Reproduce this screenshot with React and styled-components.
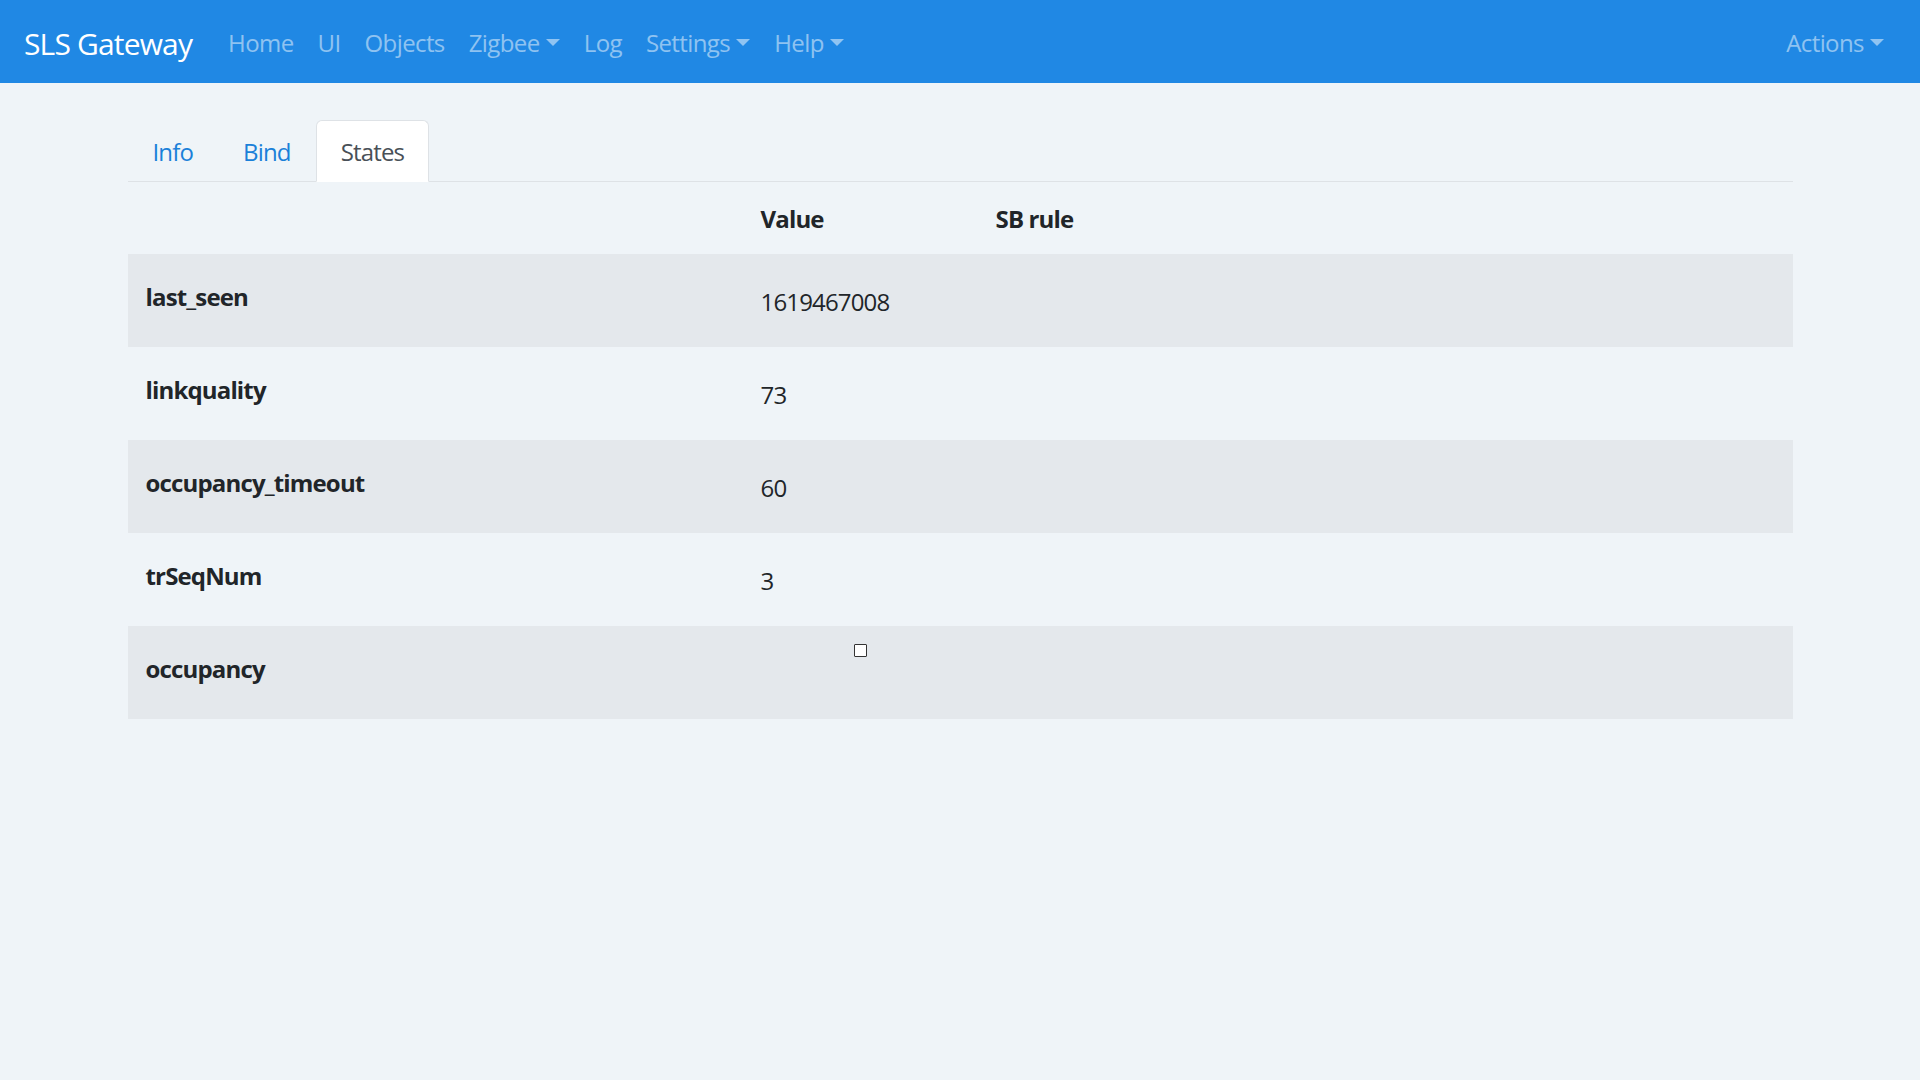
import React from 'react';
import styled, { createGlobalStyle, css } from 'styled-components';

const GlobalStyle = createGlobalStyle`
  html, body {
    margin: 0;
    padding: 0;
  }
  body {
    background: #eff4f8;
    color: #212529;
    font-family: "Open Sans", "Noto Sans", Arial, sans-serif;
    font-size: 24px;
    line-height: 1.5;
    letter-spacing: -0.035em;
  }
  * {
    box-sizing: border-box;
  }
`;

const Navbar = styled.nav`
  display: flex;
  align-items: center;
  height: 83px;
  padding: 14px 24px 11px;
  background: #2088e4;
`;

const Brand = styled.a`
  font-size: 30px;
  line-height: 45px;
  color: #fff;
  margin-right: 24px;
  text-decoration: none;
  white-space: nowrap;
`;

const NavList = styled.div`
  display: flex;
  align-items: center;
  ${({ $right }) => $right && css`margin-left: auto;`}
`;

const NavLink = styled.a`
  padding: 0 12px;
  line-height: 36px;
  letter-spacing: -0.025em;
  color: rgba(255, 255, 255, 0.5);
  text-decoration: none;
  white-space: nowrap;
  ${({ $dropdown }) =>
    $dropdown &&
    css`
      &::after {
        content: '';
        display: inline-block;
        margin-left: 0.255em;
        vertical-align: 0.255em;
        border-top: 0.3em solid;
        border-right: 0.3em solid transparent;
        border-left: 0.3em solid transparent;
      }
    `}
`;

const Container = styled.main`
  width: 1665px;
  margin: 37px auto 0;
`;

const Tabs = styled.div`
  display: flex;
  border-bottom: 1px solid #dee2e6;
`;

const Tab = styled.a`
  padding: 13px 24px 11px;
  line-height: 36px;
  margin-bottom: -1px;
  border: 1px solid transparent;
  border-radius: 6px 6px 0 0;
  color: #1a80d9;
  text-decoration: none;
  ${({ $active }) =>
    $active &&
    css`
      color: #495057;
      background: #fff;
      border-color: #dee2e6 #dee2e6 #fff;
    `}
`;

const Table = styled.table`
  width: 100%;
  border-collapse: collapse;
  table-layout: fixed;
`;

const Col = styled.col`
  width: ${({ $w }) => $w || 'auto'};
`;

const Th = styled.th`
  padding: 19px 18px 17px;
  line-height: 36px;
  text-align: left;
  font-weight: 700;
`;

const Row = styled.tr`
  height: 93px;
  background: ${({ $striped }) => ($striped ? '#e4e8ec' : 'transparent')};
`;

const Label = styled.td`
  padding: 18px 18px 25px;
  font-weight: 700;
  vertical-align: middle;
  line-height: 36px;
`;

const Value = styled.td`
  padding: 20px 18px 18px;
  vertical-align: middle;
  line-height: 36px;
`;

const CheckCell = styled.td`
  padding: 18px;
  vertical-align: top;
  text-align: center;
`;

const Check = styled.input.attrs({ type: 'checkbox' })`
  appearance: none;
  display: block;
  width: 13px;
  height: 13px;
  margin: 0 auto;
  border: 1px solid #333;
  border-radius: 1px;
  background: #fff;
`;

const states = [
  { name: 'last_seen', value: '1619467008' },
  { name: 'linkquality', value: '73' },
  { name: 'occupancy_timeout', value: '60' },
  { name: 'trSeqNum', value: '3' },
  { name: 'occupancy', bool: true },
];

export default function App() {
  return (
    <>
      <GlobalStyle />
      <Navbar>
        <Brand href="#">SLS Gateway</Brand>
        <NavList>
          <NavLink href="#">Home</NavLink>
          <NavLink href="#">UI</NavLink>
          <NavLink href="#">Objects</NavLink>
          <NavLink href="#" $dropdown>Zigbee</NavLink>
          <NavLink href="#">Log</NavLink>
          <NavLink href="#" $dropdown>Settings</NavLink>
          <NavLink href="#" $dropdown>Help</NavLink>
        </NavList>
        <NavList $right>
          <NavLink href="#" $dropdown>Actions</NavLink>
        </NavList>
      </Navbar>
      <Container>
        <Tabs>
          <Tab href="#">Info</Tab>
          <Tab href="#">Bind</Tab>
          <Tab href="#" $active>States</Tab>
        </Tabs>
        <Table>
          <colgroup>
            <Col $w="615px" />
            <Col $w="235px" />
            <Col />
          </colgroup>
          <thead>
            <tr>
              <Th></Th>
              <Th>Value</Th>
              <Th>SB rule</Th>
            </tr>
          </thead>
          <tbody>
            {states.map((s, i) => (
              <Row key={s.name} $striped={i % 2 === 0}>
                <Label>{s.name}</Label>
                {s.bool ? (
                  <CheckCell>
                    <Check readOnly />
                  </CheckCell>
                ) : (
                  <Value>{s.value}</Value>
                )}
                <Value></Value>
              </Row>
            ))}
          </tbody>
        </Table>
      </Container>
    </>
  );
}
